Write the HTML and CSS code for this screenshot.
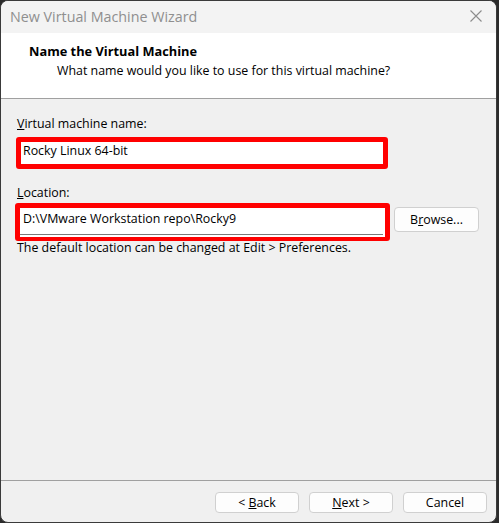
FILE: index.html
```html
<!DOCTYPE html>
<html>
<head>
<meta charset="utf-8">
<link rel="stylesheet" href="styles.css">
</head>
<body>
<div class="window">
  <div class="titlebar">
    <span class="title">New Virtual Machine Wizard</span>
    <svg class="close" width="12" height="12" viewBox="0 0 12 12"><path d="M0.5 0.5 L11.5 11.5 M11.5 0.5 L0.5 11.5" stroke="#8c8c8c" stroke-width="1.1" fill="none"/></svg>
  </div>
  <div class="header">
    <div class="h-title">Name the Virtual Machine</div>
    <div class="h-sub">What name would you like to use for this virtual machine?</div>
  </div>
  <div class="content">
    <div class="label"><u>V</u>irtual machine name:</div>
    <div class="hl hl-name"><div class="field">Rocky Linux 64-bit</div></div>
    <div class="label label-loc"><u>L</u>ocation:</div>
    <div class="loc-row">
      <div class="hl hl-loc"><div class="field field-loc">D:\VMware Workstation repo\Rocky9</div></div>
      <div class="btn btn-browse"><span>B<u>r</u>owse...</span></div>
    </div>
    <div class="note">The default location can be changed at Edit &gt; Preferences.</div>
  </div>
  <div class="footer">
    <div class="btn"><span>&lt; <u>B</u>ack</span></div>
    <div class="btn"><span><u>N</u>ext &gt;</span></div>
    <div class="btn"><span>Cancel</span></div>
  </div>
</div>
</body>
</html>
```
FILE: styles.css
```css
html, body {
  margin: 0;
  padding: 0;
  background: #2b2b2b;
}
body {
  width: 499px;
  height: 523px;
  overflow: hidden;
  font-family: "Open Sans", "Noto Sans", sans-serif;
  font-size: 12.4px;
  color: #000;
}
.window {
  width: 495px;
  height: 521px;
  border: 1px solid #3a3a3a;
  border-radius: 8px;
  background: #f0f0f0;
  overflow: hidden;
  display: flex;
  flex-direction: column;
}
.titlebar {
  height: 32px;
  background: #f3f3f3;
  display: flex;
  align-items: center;
  justify-content: space-between;
  padding: 0 14px 0 9px;
}
.title {
  font-size: 14.3px;
  color: #8f8f8f;
  line-height: 20px;
}
.close {
  display: block;
  margin-top: -2px;
}
.header {
  background: #fff;
  border-bottom: 1px solid #a0a0a0;
  padding: 10px 0 0 28px;
  box-sizing: border-box;
  height: 66px;
}
.h-title {
  font-weight: bold;
  font-size: 12.8px;
  line-height: 16px;
}
.h-sub {
  line-height: 16px;
  margin-top: 4px;
  padding-left: 28px;
}
.content {
  flex: 1;
  padding: 17px 0 0 16px;
  display: flex;
  flex-direction: column;
  align-items: flex-start;
}
.label {
  line-height: 16px;
}
.hl {
  border: 5px solid #ff0000;
  border-radius: 3px;
  background: #fff;
  box-sizing: border-box;
}
.hl-name {
  margin-top: 5px;
  margin-left: -1px;
  width: 372px;
  height: 32px;
  padding: 1px 0 0 1px;
}
.field {
  line-height: 16px;
  padding-left: 1px;
}
.label-loc {
  margin-top: 16px;
}
.loc-row {
  margin-top: 2px;
  margin-left: -2px;
  display: flex;
  align-items: flex-start;
  gap: 4px;
}
.hl-loc {
  width: 375px;
  height: 38px;
  border-bottom-width: 4px;
  padding: 0;
}
.field-loc {
  height: 27px;
  border-bottom: 1px solid #7a7a7a;
  box-sizing: border-box;
  padding: 3px 0 0 3px;
  margin-right: 2px;
}
.btn {
  width: 84px;
  height: 21px;
  box-sizing: border-box;
  background: #fdfdfd;
  border: 1px solid #d0d0d0;
  border-radius: 4px;
  display: flex;
  align-items: center;
  justify-content: center;
  line-height: 16px;
}
.btn-browse {
  width: 85px;
  height: 25px;
  margin-top: 4px;
}
.note {
  line-height: 16px;
  margin-top: -1px;
}
.footer {
  height: 42px;
  border-top: 1px solid #a0a0a0;
  box-sizing: border-box;
  padding: 11px 9px 0 0;
  display: flex;
  justify-content: flex-end;
  align-items: flex-start;
  gap: 10px;
  flex-shrink: 0;
}
```
